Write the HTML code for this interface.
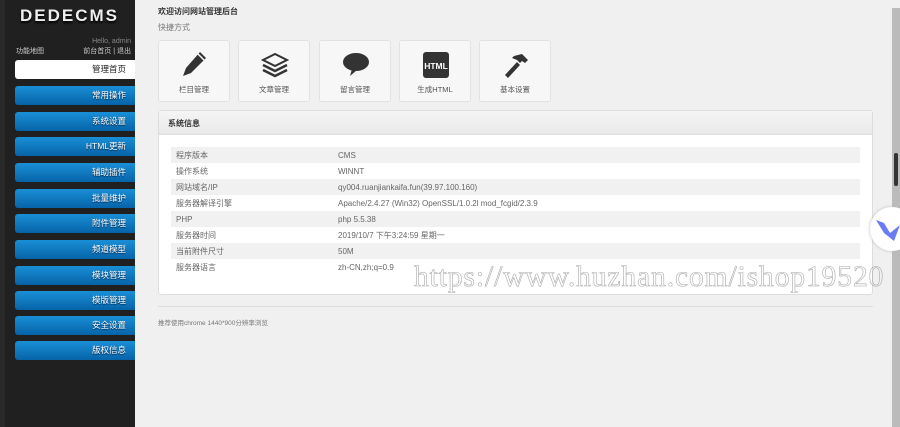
<!DOCTYPE html>
<html><head><meta charset="utf-8"><style>
*{margin:0;padding:0;box-sizing:border-box}
body{width:900px;height:427px;overflow:hidden;background:#f0f0f0;font-family:"Liberation Sans","Noto Sans CJK SC",sans-serif;position:relative;font-size:8px;color:#555}
#side{position:absolute;left:0;top:0;width:135px;height:427px;background:#202020;border-left:5px solid #2a2a2a}
.logo{position:absolute;left:15px;top:6px;font-size:17px;font-weight:bold;letter-spacing:2px;color:#eee;text-shadow:0 2px 2px #000}
.hello{position:absolute;right:4px;top:37px;font-size:7px;color:#888;text-align:right;line-height:10px}
.hello b{font-weight:normal;color:#ccc}
.map{position:absolute;left:11px;top:46px;font-size:7px;color:#ccc}
.btn{position:absolute;left:10px;width:120px;height:19px;border-radius:3px 0 0 3px;background:linear-gradient(#1a8fd6,#0663a8);color:#fff;font-size:8.5px;text-align:right;padding-right:9px;line-height:19px;text-shadow:0 1px 1px #024}
.btn.on{background:#fff;color:#222;text-shadow:none}
.t{position:absolute;left:158px;font-size:8px;color:#333}
.ic{position:absolute;top:40px;width:72px;height:62px;background:#f7f7f7;border:1px solid #e2e2e2;border-radius:3px;text-align:center}
.ic span{position:absolute;left:0;right:0;top:43px;font-size:7.5px;color:#555}
.ic svg{position:absolute;left:22px;top:9px}
#panel{position:absolute;left:158px;top:110px;width:715px;height:185px;background:#fff;border:1px solid #ddd;border-radius:3px}
#panel .h{height:24px;background:linear-gradient(#f5f5f5,#e9e9e9);border-bottom:1px solid #ddd;font-size:8px;color:#333;font-weight:bold;padding:7px 9px}
table{position:absolute;left:12px;top:36px;width:689px;border-collapse:collapse}
td{height:16px;font-size:8px;color:#666;padding-left:5px}
tr:nth-child(odd) td{background:#f1f1f1}
td:first-child{width:162px}
#wm{position:absolute;left:414px;top:261px;font-family:"Liberation Serif",serif;font-size:29.5px;color:transparent;-webkit-text-stroke:0.6px #aaa;letter-spacing:0.9px;white-space:nowrap}
#sb{position:absolute;left:892px;top:8px;width:8px;height:419px;background:#bbb}
</style></head><body>
<div id="side">
<div class="logo">DEDECMS</div>
<div class="hello">Hello, admin<br><b>前台首页 | 退出</b></div>
<div class="map">功能地图</div>
<div class="btn on" style="top:60px">管理首页</div>
<div class="btn" style="top:86px">常用操作</div>
<div class="btn" style="top:112px">系统设置</div>
<div class="btn" style="top:137px">HTML更新</div>
<div class="btn" style="top:163px">辅助插件</div>
<div class="btn" style="top:189px">批量维护</div>
<div class="btn" style="top:214px">附件管理</div>
<div class="btn" style="top:240px">频道模型</div>
<div class="btn" style="top:266px">模块管理</div>
<div class="btn" style="top:291px">模版管理</div>
<div class="btn" style="top:316px">安全设置</div>
<div class="btn" style="top:341px">版权信息</div>
</div>
<div class="t" style="top:6px;font-weight:bold">欢迎访问网站管理后台</div>
<div class="t" style="top:22px;color:#777">快捷方式</div>
<div class="ic" style="left:158px"><svg width="28" height="30" viewBox="0 0 28 30"><path d="M19 2l6 6-15 15-8 3 3-8z" fill="#333"/><path d="M17 4l6 6" stroke="#f7f7f7" stroke-width="1.5"/></svg><span>栏目管理</span></div>
<div class="ic" style="left:238px"><svg width="28" height="30" viewBox="0 0 28 30"><path d="M2 10l12-6 12 6-12 6z" fill="none" stroke="#333" stroke-width="2"/><path d="M2 15l12 6 12-6M2 20l12 6 12-6" fill="none" stroke="#333" stroke-width="2.5"/></svg><span>文章管理</span></div>
<div class="ic" style="left:319px"><svg width="28" height="30" viewBox="0 0 28 30"><ellipse cx="14" cy="12" rx="13" ry="9" fill="#333"/><path d="M10 19l-2 7 7-6z" fill="#333"/></svg><span>留言管理</span></div>
<div class="ic" style="left:399px"><svg width="28" height="30" viewBox="0 0 28 30"><rect x="1" y="2" width="26" height="26" rx="3" fill="#333"/><text x="14" y="19" font-size="8.5" fill="#fff" font-weight="bold" text-anchor="middle" font-family="Liberation Sans">HTML</text></svg><span>生成HTML</span></div>
<div class="ic" style="left:479px"><svg width="28" height="30" viewBox="0 0 28 30"><path d="M12 6l8-2 6 6-3 3-3-2-2 2-3-3-5-2z" fill="#333"/><path d="M15 12l-12 13 3 3 12-13z" fill="#333"/></svg><span>基本设置</span></div>
<div id="panel"><div class="h">系统信息</div>
<table>
<tr><td>程序版本</td><td>CMS</td></tr>
<tr><td>操作系统</td><td>WINNT</td></tr>
<tr><td>网站域名/IP</td><td>qy004.ruanjiankaifa.fun(39.97.100.160)</td></tr>
<tr><td>服务器解译引擎</td><td>Apache/2.4.27 (Win32) OpenSSL/1.0.2l mod_fcgid/2.3.9</td></tr>
<tr><td>PHP</td><td>php 5.5.38</td></tr>
<tr><td>服务器时间</td><td>2019/10/7 下午3:24:59 星期一</td></tr>
<tr><td>当前附件尺寸</td><td>50M</td></tr>
<tr><td>服务器语言</td><td>zh-CN,zh;q=0.9</td></tr>
</table></div>
<div style="position:absolute;left:158px;top:306px;width:715px;border-top:1px solid #ddd"></div>
<div class="t" style="top:317px;font-size:6.5px;color:#777">推荐使用chrome 1440*900分辨率浏览</div>
<div id="wm">https://www.huzhan.com/ishop19520</div>
<div id="sb"><div style="position:absolute;left:2px;top:145px;width:4px;height:33px;background:#333;border-radius:2px"></div></div>
<div style="position:absolute;left:870px;top:207px;width:44px;height:44px;border-radius:50%;background:#fff;box-shadow:0 0 3px #bbb"><svg width="30" height="30" viewBox="0 0 30 30" style="position:absolute;left:4px;top:7px"><path d="M2 6l8 3 6 10 10-8-6 16-10-8z" fill="#6a7cf5"/></svg></div>
</body></html>
